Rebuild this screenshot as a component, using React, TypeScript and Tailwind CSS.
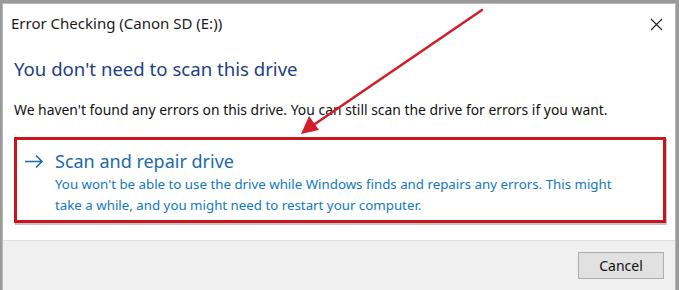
export default function App() {
  return (
    <div className="relative w-[679px] h-[290px] overflow-hidden bg-[#9a9a9a] pl-[2px] pt-[3px] pr-[3px] font-['Noto_Sans',sans-serif]">
      <div className="flex flex-col h-[290px] bg-white border border-[#b9b9b9]">
        {/* title bar */}
        <div className="flex items-center justify-between h-[38px] pl-[8px] pr-[12px]">
          <span className="text-[15px] text-[#1a1a1a] leading-none">Error Checking (Canon SD (E:))</span>
          <svg width="13" height="13" viewBox="0 0 13 13" className="mt-[2px]">
            <path d="M1 1L12 12M12 1L1 12" stroke="#222" strokeWidth="1.1" />
          </svg>
        </div>

        <div className="px-[11px]">
          <h1 className="mt-[14px] text-[18.6px] leading-[26px] text-[#1d3f7f]">You don't need to scan this drive</h1>
          <p className="mt-[18px] text-[13.9px] leading-[20px] text-[#111]">
            We haven't found any errors on this drive. You can still scan the drive for errors if you want.
          </p>

          <div className="mt-[17px] -mr-[2px] shadow-[1px_2px_0_#c4c4c4]">
            <div className="border-[3px] border-[#c8161e] h-[86px] pl-[6px] pt-[8px]">
              <div className="flex items-start">
                <svg width="32" height="26" viewBox="0 0 32 26" className="shrink-0">
                  <path d="M2 13.5H19M13 7.5L19 13.5L13 19.5" stroke="#1c6aa8" strokeWidth="1.6" fill="none" />
                </svg>
                <div className="flex flex-col">
                  <span className="text-[18px] leading-[26px] text-[#1c6aa8]">Scan and repair drive</span>
                  <span className="text-[13.3px] leading-[21px] text-[#1178bd]">
                    You won't be able to use the drive while Windows finds and repairs any errors. This might
                    <br />
                    take a while, and you might need to restart your computer.
                  </span>
                </div>
              </div>
            </div>
          </div>
        </div>

        {/* footer */}
        <div className="mt-[17px] flex-1 bg-[#f0f0f0] border-t border-[#dfdfdf] flex justify-end pr-[11px] pt-[11px]">
          <button className="w-[86px] h-[27px] bg-[#e1e1e1] border border-[#adadad] text-[14px] text-[#111] leading-none">
            Cancel
          </button>
        </div>
      </div>

      {/* red annotation arrow */}
      <svg className="absolute left-0 top-0 pointer-events-none" width="679" height="290">
        <line x1="482" y1="10" x2="312" y2="126" stroke="#d01f2a" strokeWidth="2.6" strokeLinecap="round" />
        <polygon points="301,134 309,116 319,130" fill="#d01f2a" />
      </svg>
    </div>
  );
}
